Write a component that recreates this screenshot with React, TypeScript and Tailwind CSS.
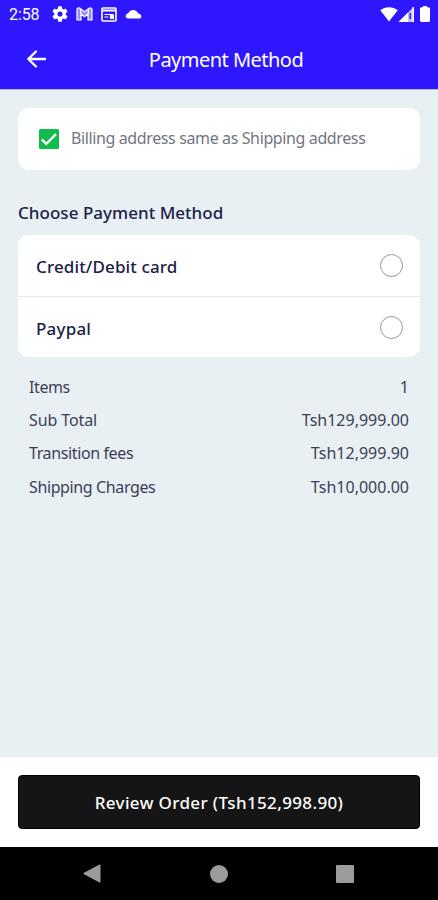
import type { ReactNode } from 'react';

function StatusBar() {
  return (
    <div className="flex h-[28px] items-center pl-[9px] pr-[8px] text-white">
      <span className="w-[43px] pt-[2px] font-['Roboto',sans-serif] text-[16px] leading-[26px] tracking-[-0.1px]">2:58</span>
      <svg className="h-[16px] w-[16px]" viewBox="2 2 20 20" fill="currentColor">
        <path d="M19.14 12.94c.04-.3.06-.61.06-.94s-.02-.64-.07-.94l2.03-1.58a.49.49 0 0 0 .12-.61l-1.92-3.32a.49.49 0 0 0-.59-.22l-2.39.96a7 7 0 0 0-1.62-.94l-.36-2.54a.48.48 0 0 0-.48-.41h-3.84a.47.47 0 0 0-.47.41l-.36 2.54c-.59.24-1.13.57-1.62.94l-2.39-.96a.48.48 0 0 0-.59.22L2.74 8.87a.48.48 0 0 0 .12.61l2.03 1.58a6 6 0 0 0 0 1.88l-2.03 1.58a.49.49 0 0 0-.12.61l1.92 3.32c.12.22.37.29.59.22l2.39-.96c.5.38 1.03.7 1.62.94l.36 2.54c.05.24.24.41.48.41h3.84c.24 0 .44-.17.47-.41l.36-2.54a7 7 0 0 0 1.62-.94l2.39.96c.22.08.47 0 .59-.22l1.92-3.32a.47.47 0 0 0-.12-.61zM12 15.2a3.2 3.2 0 1 1 0-6.4 3.2 3.2 0 0 1 0 6.4" />
      </svg>
      <svg className="ml-[8px] h-[14px] w-[17px]" viewBox="0 0 17 14" fill="none" stroke="currentColor" strokeWidth="1.2" strokeLinejoin="round">
        <path d="M1 2.8C1 .8 3 .5 4.2 1.5L8.5 4.8l4.3-3.3C14 .5 16 .8 16 2.8V13h-4V7L8.5 9.7 5 7v6H1z" fill="currentColor" fillOpacity=".5" />
        <path d="M4.700 2v5M12.300 2v5" />
      </svg>
      <svg className="ml-[8px] h-[15px] w-[16px]" viewBox="0 0 16 15" fill="none" stroke="currentColor">
        <rect x="1" y="1" width="14" height="13" rx="1" strokeWidth="1.6" />
        <path d="M1 3.500h14" strokeWidth="2" />
        <path d="M3.500 7.500h9M3.500 10h4" strokeWidth="1" />
        <path d="M9 8h4v4H9z" fill="currentColor" stroke="none" />
      </svg>
      <svg className="ml-[8px] h-[10px] w-[17px]" viewBox="0 0 17 10" fill="currentColor">
        <path d="M3 9.500C-.2 9.500-.2 5.400 3.200 4.300C5.200-.2 11.500-.2 13.200 4.500C17.200 5 17.200 9.500 14.300 9.500z" />
      </svg>
      <div className="flex-1" />
      <svg className="h-[15px] w-[18px]" viewBox="0 0 18 15" fill="currentColor">
        <path d="M.3 3.300C5 -.7 13-.7 17.700 3.300L9 14.500z" />
      </svg>
      <svg className="h-[15px] w-[16px]" viewBox="0 0 16 15" fill="currentColor">
        <path d="M15.500 0v15H.5z" fillOpacity=".72" />
        <path d="M10 5.400V15H.5zM14.500 0H16v15h-1.500z" />
        <path d="M11.500 6h1.400v6h-1.400z" fill="#2e16ff" />
      </svg>
      <svg className="ml-[6px] h-[16px] w-[10px]" viewBox="0 0 10 16" fill="currentColor">
        <path d="M3 0h4v1.200h1.500c.8 0 1.500.6 1.500 1.400v11.900c0 .8-.7 1.500-1.500 1.500h-7C.7 16 0 15.300 0 14.500V2.600C0 1.800.7 1.200 1.500 1.200H3z" />
      </svg>
    </div>
  );
}

function Option({ children }: { children: ReactNode }) {
  return (
    <div className="flex h-[61px] items-center justify-between pl-[18px] pr-[17px]">
      {children}
      <span className="h-[23px] w-[23px] rounded-full border border-[#96969b]" />
    </div>
  );
}

function Row({ label, value }: { label: ReactNode; value: ReactNode }) {
  return (
    <div className="flex h-[33.3px] items-center justify-between">
      {label}
      {value}
    </div>
  );
}

export default function App() {
  return (
    <div className="flex h-[900px] w-[438px] flex-col overflow-hidden bg-[#e8f0f3] font-['Noto_Sans',sans-serif] text-[16px] text-[#3d3f58]">
      <header className="h-[90px] shrink-0 border-b border-[#b9b8f4] bg-[#2e16ff]">
        <StatusBar />
        <div className="grid h-[61px] grid-cols-[72px_1fr_58px] items-center text-white">
          <svg className="ml-[26px] h-[20px] w-[21px]" viewBox="0 0 21 20" fill="none" stroke="currentColor" strokeWidth="2.4" strokeLinecap="round" strokeLinejoin="round">
            <path d="M19 10H2.500M10 2.500L2.300 10L10 17.500" />
          </svg>
          <h1 className="whitespace-nowrap pt-[2px] text-center text-[20px] leading-[28px] tracking-[-0.52px]">Payment Method</h1>
        </div>
      </header>
      <main className="flex-1 px-[18px] pt-[18px]">
        <section className="flex h-[62px] items-center rounded-[11px] bg-white pl-[21px]">
          <svg className="h-[20px] w-[20px]" viewBox="0 0 20 20">
            <rect width="20" height="20" rx="1.5" fill="#0fbd4b" />
            <path d="M2.800 10.300L7.300 14.800L17 5.200" fill="none" stroke="#fff" strokeWidth="2.4" />
          </svg>
          <span className="ml-[12px] whitespace-nowrap pb-[2px] tracking-[-0.38px] text-[#73757f]">Billing address same as Shipping address</span>
        </section>
        <h2 className="mt-[30px] h-[26px] whitespace-nowrap text-[17px] font-medium leading-[26px] tracking-[0.03px] text-[#20204a]">Choose Payment Method</h2>
        <section className="mt-[9px] h-[122px] rounded-[11px] bg-white font-medium text-[#20204a]">
          <Option><span className="whitespace-nowrap pt-[2px] text-[17px] tracking-[0.13px]">Credit/Debit card</span></Option>
          <div className="h-px bg-[#e8e9ec]" />
          <Option><span className="whitespace-nowrap pt-[2px] text-[17px] tracking-[0.2px]">Paypal</span></Option>
        </section>
        <section className="mt-[13px] pl-[11px] pr-[11px]">
          <Row label={<span className="tracking-[-0.4px]">Items</span>} value={<span>1</span>} />
          <Row label={<span className="tracking-[-0.1px]">Sub Total</span>} value={<span>Tsh129,999.00</span>} />
          <Row label={<span className="tracking-[-0.38px]">Transition fees</span>} value={<span>Tsh12,999.90</span>} />
          <Row label={<span className="tracking-[-0.38px]">Shipping Charges</span>} value={<span>Tsh10,000.00</span>} />
        </section>
      </main>
      <footer className="h-[90px] shrink-0 bg-white px-[18px] pt-[18px]">
        <button className="flex h-[54px] w-full items-center justify-center whitespace-nowrap rounded-[4px] border border-black bg-[#151515] text-[17px] font-medium text-white">
          <span className="pt-[2px] tracking-[0.36px]">Review Order (Tsh152,998.90)</span>
        </button>
      </footer>
      <nav className="flex h-[53px] shrink-0 items-center bg-black pl-[83px] text-[#9b9b9b]">
        <svg className="h-[19px] w-[18px]" viewBox="0 0 18 19" fill="currentColor">
          <path d="M16 .8C17 .3 17.500.8 17.500 1.500V17.500C17.500 18.300 17 18.600 16 18.200L1 10.200C.3 9.800.3 9.200 1 8.800z" />
        </svg>
        <span className="ml-[109px] h-[18px] w-[18px] rounded-full bg-[#9b9b9b]" />
        <span className="ml-[108px] h-[18px] w-[18px] rounded-[1px] bg-[#9b9b9b]" />
      </nav>
    </div>
  );
}
